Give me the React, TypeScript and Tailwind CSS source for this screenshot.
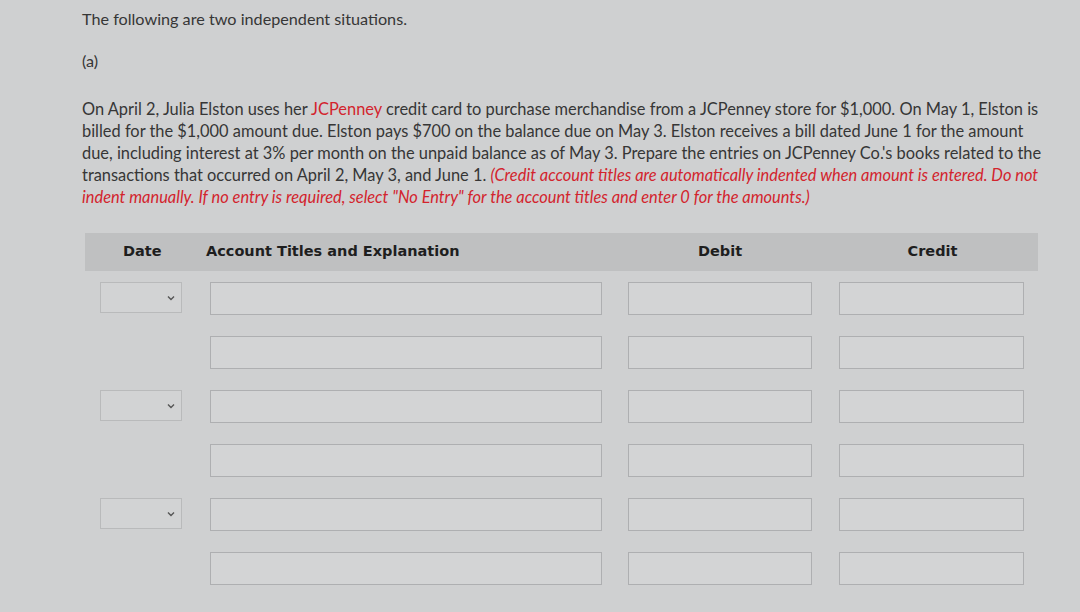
import React from 'react';

const Chevron = () => (
  <svg width="8" height="6" viewBox="0 0 8 6" className="text-[#555]">
    <path d="M1 1.5 L4 4.5 L7 1.5" fill="none" stroke="currentColor" strokeWidth="1.4" />
  </svg>
);

const rows = [true, false, true, false, true, false];

export default function App() {
  return (
    <div className="w-[1080px] h-[612px] overflow-hidden bg-[#cfd0d1] text-[#363636]" style={{ fontFamily: 'Lato, "Open Sans", sans-serif' }}>
      <div className="pl-[82px] pt-[9px]">
        <p className="text-[16.2px] leading-[20px]">The following are two independent situations.</p>
        <p className="text-[16.2px] leading-[20px] mt-[22px]">(a)</p>

        <p className="text-[16.4px] leading-[22px] mt-[27px] w-[990px] whitespace-nowrap">
          On April 2, Julia Elston uses her <span className="text-[#d3242d]">JCPenney</span> credit card to purchase merchandise from a JCPenney store for $1,000. On May 1, Elston is
          <br />
          billed for the $1,000 amount due. Elston pays $700 on the balance due on May 3. Elston receives a bill dated June 1 for the amount
          <br />
          due, including interest at 3% per month on the unpaid balance as of May 3. Prepare the entries on JCPenney Co.'s books related to the
          <br />
          transactions that occurred on April 2, May 3, and June 1.{' '}
          <span className="italic text-[#d3242d]">(Credit account titles are automatically indented when amount is entered. Do not</span>
          <br />
          <span className="italic text-[#d3242d]">indent manually. If no entry is required, select "No Entry" for the account titles and enter 0 for the amounts.)</span>
        </p>
      </div>

      <div className="ml-[85px] mt-[25px] w-[953px]">
        <div className="h-[38px] bg-[#bfc0c1] flex items-center font-bold text-[14.5px] text-[#1e1e1e]" style={{ fontFamily: '"DejaVu Sans", Verdana, sans-serif' }}>
          <div className="w-[121px] pl-[38px]">Date</div>
          <div className="w-[422px]">Account Titles and Explanation</div>
          <div className="w-[184px] text-center">Debit</div>
          <div className="w-[28px]" />
          <div className="w-[185px] text-center">Credit</div>
        </div>

        <div className="flex flex-col gap-[21px] mt-[11px] pl-[15px]">
          {rows.map((hasDate, i) => (
            <div key={i} className="flex items-start h-[33px]">
              <div className="w-[82px] h-[31px] shrink-0">
                {hasDate && (
                  <div className="w-full h-full border border-[#b9babb] bg-[#d2d3d4] flex items-center justify-end pr-[6px]">
                    <Chevron />
                  </div>
                )}
              </div>
              <div className="ml-[28px] w-[392px] h-[33px] border border-[#aeafb1] bg-[#d3d4d5]" />
              <div className="ml-[26px] w-[184px] h-[33px] border border-[#aeafb1] bg-[#d3d4d5]" />
              <div className="ml-[27px] w-[185px] h-[33px] border border-[#aeafb1] bg-[#d3d4d5]" />
            </div>
          ))}
        </div>
      </div>
    </div>
  );
}
